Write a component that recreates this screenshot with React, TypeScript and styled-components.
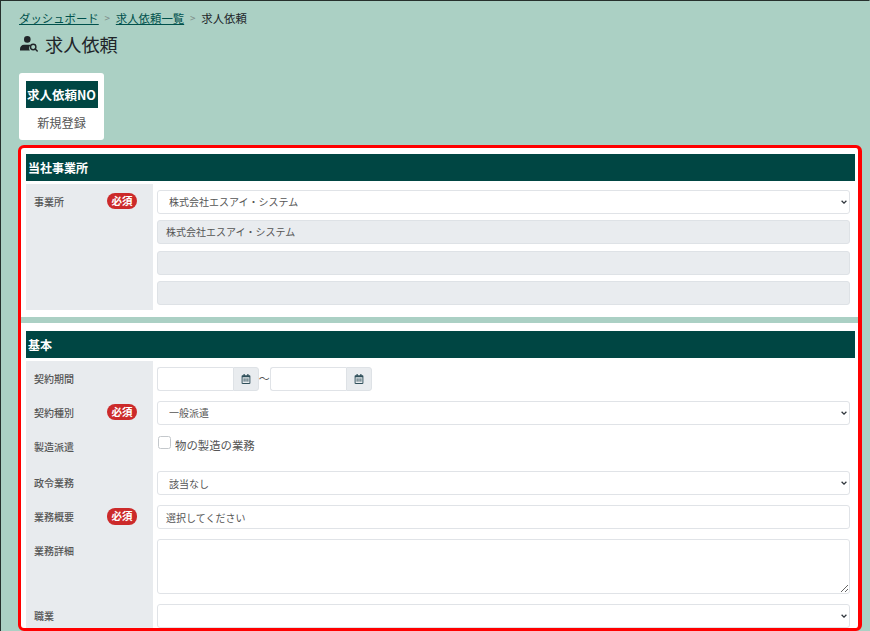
import * as React from 'react';
import styled, { createGlobalStyle } from 'styled-components';
import { FaRegCalendarAlt } from 'react-icons/fa';

const GlobalStyle = createGlobalStyle`
  html, body {
    margin: 0;
    padding: 0;
    height: 631px;
    overflow: hidden;
  }

  body {
    font-family: "Noto Sans CJK JP", "Noto Sans", sans-serif;
    color: #212529;
  }

  * {
    box-sizing: border-box;
  }
`;

const CHEVRON =
  "data:image/svg+xml,%3Csvg xmlns='http://www.w3.org/2000/svg' viewBox='0 0 6 4'%3E%3Cpath d='M.6.7 3 3.1 5.4.7' fill='none' stroke='%23343a40' stroke-width='1.3'/%3E%3C/svg%3E";

function Field(props: { label: string; required?: boolean; children: React.ReactNode }) {
  return (
    <Row>
      <Label>
        <span>{props.label}</span>
        {props.required && <Badge>必須</Badge>}
      </Label>
      <Fields>{props.children}</Fields>
    </Row>
  );
}

function DateInput() {
  return (
    <DateGroup>
      <DateBox type="text" />
      <DateAddon>
        <FaRegCalendarAlt />
      </DateAddon>
    </DateGroup>
  );
}

function UserSearchIcon() {
  return (
    <svg viewBox="0 0 18 16" width="18" height="16" fill="currentColor">
      <circle cx="7.3" cy="3.4" r="3.3" />
      <path d="M0 14.5v-1.6C0 10.6 1.9 8.8 4 8.8h4.6c.7 0 1.300.1 1.900.4-.9.8-1.400 1.800-1.400 3 0 .9.3 1.700.8 2.300z" />
      <circle cx="13.200" cy="11" r="2.700" fill="none" stroke="currentColor" strokeWidth="1.400" />
      <path d="M15.200 13l2 2" fill="none" stroke="currentColor" strokeWidth="1.500" strokeLinecap="round" />
    </svg>
  );
}

export default function App() {
  return (
    <Page>
      <GlobalStyle />
      <Breadcrumb>
        <Crumb href="#">ダッシュボード</Crumb>
        <Sep>&gt;</Sep>
        <Crumb href="#">求人依頼一覧</Crumb>
        <Sep>&gt;</Sep>
        <span>求人依頼</span>
      </Breadcrumb>
      <Title>
        <UserSearchIcon />
        <span>求人依頼</span>
      </Title>
      <NoCard>
        <NoHead>求人依頼NO</NoHead>
        <NoValue>新規登録</NoValue>
      </NoCard>
      <Panel>
        <Section>
          <SectionHead>当社事業所</SectionHead>
          <Row>
            <Label>
              <span>事業所</span>
              <Badge>必須</Badge>
            </Label>
            <StackedFields>
              <Select defaultValue="a">
                <option value="a">株式会社エスアイ・システム</option>
              </Select>
              <ReadOnly>株式会社エスアイ・システム</ReadOnly>
              <ReadOnly />
              <ReadOnly />
            </StackedFields>
          </Row>
        </Section>
        <Band />
        <Section>
          <SectionHead>基本</SectionHead>
          <Rows>
            <Field label="契約期間">
              <DateRange>
                <DateInput />
                <Tilde>～</Tilde>
                <DateInput />
              </DateRange>
            </Field>
            <Field label="契約種別" required>
              <Select defaultValue="a">
                <option value="a">一般派遣</option>
              </Select>
            </Field>
            <Field label="製造派遣">
              <CheckLine>
                <CheckBox type="checkbox" />
                <span>物の製造の業務</span>
              </CheckLine>
            </Field>
            <Field label="政令業務">
              <Select defaultValue="a">
                <option value="a">該当なし</option>
              </Select>
            </Field>
            <Field label="業務概要" required>
              <TextInput type="text" defaultValue="選択してください" />
            </Field>
            <Field label="業務詳細">
              <TextArea />
            </Field>
            <Field label="職業">
              <Select defaultValue="a">
                <option value="a"></option>
              </Select>
            </Field>
          </Rows>
        </Section>
      </Panel>
    </Page>
  );
}

const Page = styled.div`
  display: flex;
  flex-direction: column;
  height: 631px;
  padding: 9px 7px 0 17px;
  background-color: #abd0c4;
  border: 1px solid #26302d;
  border-right-color: #abd0c4;
  border-bottom: 0;
`;

const Breadcrumb = styled.nav`
  display: flex;
  align-items: center;
  gap: 5.75px;
  flex: none;
  height: 16px;
  padding-left: 1px;
  font-size: 11.4px;
  line-height: 16px;
`;

const Crumb = styled.a`
  color: #00514c;
  text-decoration: underline;
`;

const Sep = styled.span`
  color: #7d8c88;
  font-size: 10px;
`;

const Title = styled.h1`
  display: flex;
  align-items: center;
  gap: 7px;
  flex: none;
  height: 26px;
  margin: 5px 0 0;
  padding-left: 2px;
  font-size: 18.2px;
  font-weight: 400;
  line-height: 26px;

  svg {
    flex: none;
    margin-bottom: 1px;
  }
`;

const NoCard = styled.div`
  display: flex;
  flex-direction: column;
  align-items: center;
  flex: none;
  width: 85px;
  height: 66.5px;
  margin: 16px 0 0 1px;
  padding-top: 8px;
  background-color: #fff;
  border-radius: 3px;
`;

const NoHead = styled.div`
  width: 72px;
  height: 27px;
  background-color: #004643;
  color: #fff;
  font-size: 12.5px;
  font-weight: 700;
  line-height: 27px;
  text-align: center;
  white-space: nowrap;
`;

const NoValue = styled.div`
  margin-top: 6px;
  color: #555;
  font-size: 12.2px;
  line-height: 18px;
`;

const Panel = styled.div`
  flex: 1;
  min-height: 0;
  margin-top: 5.5px;
  padding-top: 6px;
  overflow: hidden;
  background-color: #fff;
  border: 3px solid #f00;
  border-right-width: 4px;
  border-radius: 6px;
`;

const Section = styled.section`
  margin: 0 3px 0 5px;
`;

const SectionHead = styled.h2`
  height: 27px;
  margin: 0 0 3px;
  padding-left: 2px;
  background-color: #004643;
  color: #fff;
  font-size: 12px;
  font-weight: 700;
  line-height: 27px;
`;

const Band = styled.div`
  height: 6px;
  margin: 7px 0 8px;
  background-color: #abd0c4;
`;

const Rows = styled.div`
  display: flex;
  flex-direction: column;

  > :first-child > :last-child {
    padding-top: 5.5px;
  }
`;

const Row = styled.div`
  display: grid;
  grid-template-columns: 127px 1fr;
`;

const Label = styled.div`
  display: flex;
  align-items: flex-start;
  justify-content: space-between;
  padding: 5.5px 16px 0 8px;
  background-color: #e8ebee;
  color: #555;
  font-size: 10px;
  font-weight: 500;
  line-height: 23px;

  ${Rows} > div + div > & {
    padding-top: 0;
  }
`;

const Badge = styled.span`
  display: block;
  width: 30px;
  height: 16.5px;
  margin-top: 3px;
  background-color: #cc2a2a;
  border-radius: 8px;
  color: #fff;
  font-size: 10.5px;
  font-weight: 700;
  line-height: 16.5px;
  text-align: center;
`;

const Fields = styled.div`
  padding: 0 5px 10px 4px;
`;

const StackedFields = styled.div`
  display: flex;
  flex-direction: column;
  gap: 6.5px;
  padding: 5.5px 5px 5px 4px;
`;

const Select = styled.select`
  display: block;
  width: 100%;
  height: 24px;
  padding: 0 12px 0 11px;
  appearance: none;
  background: #fff url("${CHEVRON}") no-repeat right 2.5px center / 6px 4px;
  border: 1px solid #e0e3e7;
  border-radius: 3px;
  color: #555;
  font-family: inherit;
  font-size: 10px;
`;

const ReadOnly = styled.div`
  height: 24px;
  padding-left: 8px;
  background-color: #e9ecef;
  border: 1px solid #dee2e6;
  border-radius: 3px;
  color: #555;
  font-size: 10px;
  line-height: 22px;
`;

const TextInput = styled.input`
  display: block;
  width: 100%;
  height: 24px;
  padding: 0 8px;
  background-color: #fff;
  border: 1px solid #e0e3e7;
  border-radius: 3px;
  color: #555;
  font-family: inherit;
  font-size: 10px;
`;

const TextArea = styled.textarea`
  display: block;
  width: 100%;
  height: 55px;
  background-color: #fff;
  border: 1px solid #e0e3e7;
  border-radius: 3px;
`;

const DateRange = styled.div`
  display: flex;
  align-items: center;
`;

const DateGroup = styled.div`
  display: flex;
  width: 101.5px;
  height: 24px;
`;

const DateBox = styled.input`
  flex: 1;
  min-width: 0;
  background-color: #fff;
  border: 1px solid #e0e3e7;
  border-right: 0;
  border-radius: 3px 0 0 3px;
`;

const DateAddon = styled.div`
  display: flex;
  align-items: center;
  justify-content: center;
  width: 25.5px;
  background-color: #e9ecef;
  border: 1px solid #dee2e6;
  border-radius: 0 3px 3px 0;
  color: #2f4f5a;

  svg {
    width: 10px;
    height: 10px;
  }
`;

const Tilde = styled.span`
  width: 11.5px;
  color: #555;
  font-size: 11px;
  line-height: 1;
  text-align: center;
  white-space: nowrap;
`;

const CheckLine = styled.label`
  display: flex;
  align-items: flex-start;
  gap: 4.5px;
  height: 26.5px;
  color: #555;
  font-size: 11.4px;
  line-height: 20px;
`;

const CheckBox = styled.input`
  flex: none;
  width: 12.5px;
  height: 12.5px;
  margin: 1.5px 0 0 1px;
  appearance: none;
  background-color: #fff;
  border: 1px solid #c4c8cc;
  border-radius: 2.5px;
`;
